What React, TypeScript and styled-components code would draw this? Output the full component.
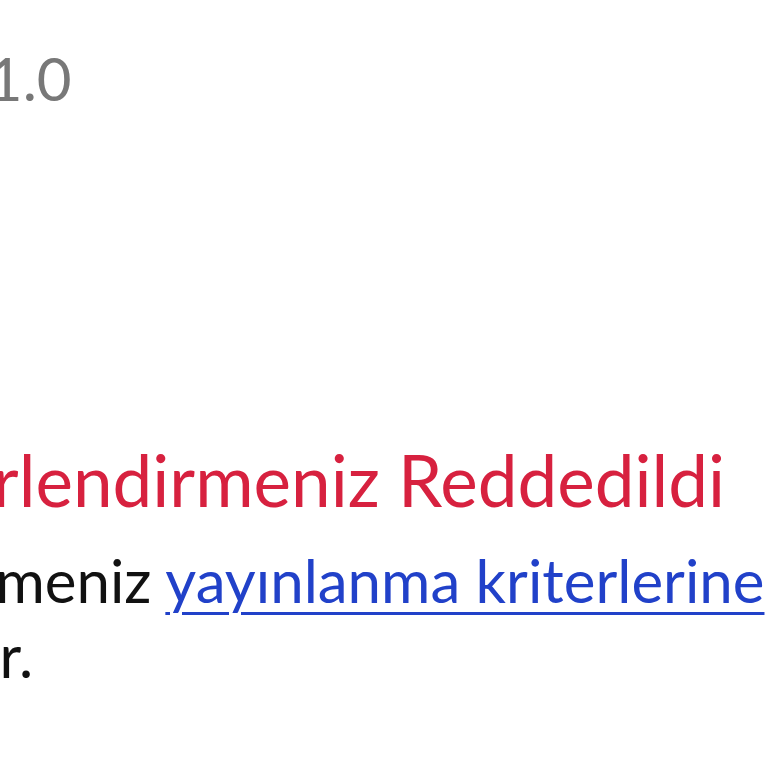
import React from 'react';
import styled, {createGlobalStyle} from 'styled-components';

const GlobalStyle = createGlobalStyle`
  html, body {
    margin: 0;
    padding: 0;
    background: #ffffff;
    overflow: hidden;
  }
  body {
    font-family: Lato, "Noto Sans", sans-serif;
  }
`;

const Page = styled.div`
  width: 768px;
  height: 768px;
  overflow: hidden;
`;

const Card = styled.div`
  margin-left: -160px;
  width: 1600px;
  display: flex;
  flex-direction: column;
`;

const Meta = styled.div`
  padding-top: 42px;
  font-size: 60px;
  line-height: 72px;
  color: #787878;
`;

const Title = styled.h2`
  margin: 321px 0 0 -12px;
  font-size: 71px;
  font-weight: 400;
  line-height: 90px;
  color: #d7213f;
`;

const Body = styled.p`
  margin: 18px 0 0;
  font-size: 60px;
  line-height: 75px;
  color: #111111;
  white-space: nowrap;
`;

const Link = styled.a`
  color: #2141c9;
  text-decoration: underline;
  text-decoration-thickness: 3px;
  text-underline-offset: 9px;
`;

export default function App() {
  return (
    <Page>
      <GlobalStyle />
      <Card>
        <Meta>Puan 1.0</Meta>
        <Title>Değerlendirmeniz Reddedildi</Title>
        <Body>
          İncelemeniz <Link href="#">yayınlanma kriterlerine</Link> uymuyor, düzenlemeniz
          <br />
          gerekir.
        </Body>
      </Card>
    </Page>
  );
}
